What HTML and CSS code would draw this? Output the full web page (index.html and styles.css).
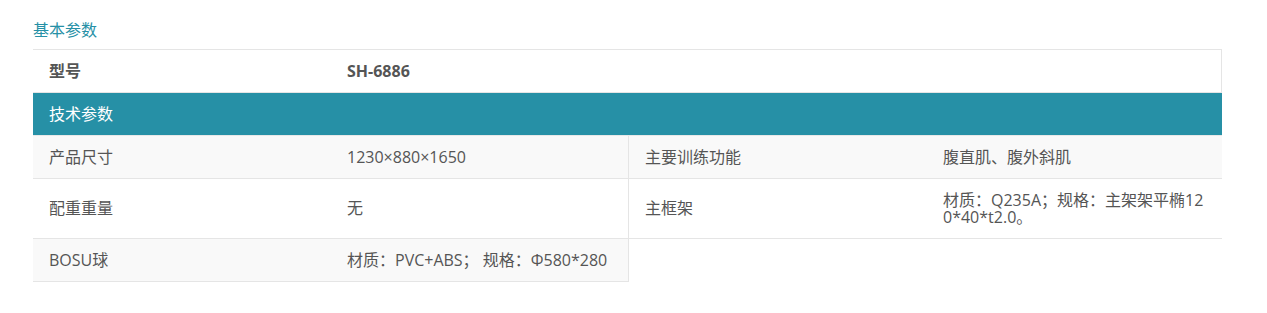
FILE: index.html
```html
<!DOCTYPE html>
<html lang="zh-CN">
<head>
    <meta charset="UTF-8">
    <title>基本参数</title>
    <link rel="stylesheet" href="styles.css">
</head>
<body>
    <div id="params">
        <h3 class="params-title">基本参数</h3>
        <div class="spec">
            <div class="spec-model">
                <div class="cell">型号</div>
                <div class="cell">SH-6886</div>
            </div>
            <div class="spec-head">技术参数</div>
            <div class="spec-list">
                <div class="item odd">
                    <div class="cell">产品尺寸</div>
                    <div class="cell">1230×880×1650</div>
                </div>
                <div class="item odd">
                    <div class="cell">主要训练功能</div>
                    <div class="cell">腹直肌、腹外斜肌</div>
                </div>
                <div class="item">
                    <div class="cell">配重重量</div>
                    <div class="cell">无</div>
                </div>
                <div class="item">
                    <div class="cell">主框架</div>
                    <div class="cell">材质：Q235A；规格：主架架平椭120*40*t2.0。</div>
                </div>
                <div class="item odd">
                    <div class="cell">BOSU球</div>
                    <div class="cell">材质：PVC+ABS； 规格：Φ580*280</div>
                </div>
            </div>
        </div>
    </div>
</body>
</html>
```

FILE: styles.css
```css
body {
    font-family: "Open Sans", "Noto Sans CJK SC", sans-serif;
    font-size: 16px;
    color: #555555;
    background-color: #FFFFFF;
    margin: 0;
    padding: 0;
}

#params {
    padding: 20px 45px 0 33px;
}

.params-title {
    font-size: 16px;
    font-weight: normal;
    color: #2690A6;
    margin: 0;
    line-height: 20px;
    padding-bottom: 9px;
}

.spec {
    width: 1189px;
}

.spec-model {
    display: grid;
    grid-template-columns: 298px 1fr;
    border: 1px solid #E5E5E5;
    border-left: none;
    font-weight: bold;
}

.cell {
    padding: 12.5px 16px;
    line-height: 17px;
    word-break: break-all;
    display: flex;
    align-items: center;
}

.spec-head {
    background-color: #2690A6;
    color: #FFFFFF;
    padding: 0 16px;
    line-height: 42px;
    border-bottom: 1px solid #E8E8E8;
}

.spec-list {
    display: grid;
    grid-template-columns: 596px 1fr;
}

.item {
    display: grid;
    grid-template-columns: 298px 1fr;
    border-bottom: 1px solid #E5E5E5;
    background-color: #FFFFFF;
}

.item.odd {
    background-color: #F9F9F9;
}

.item:nth-child(odd) {
    border-right: 1px solid #E5E5E5;
}
```
